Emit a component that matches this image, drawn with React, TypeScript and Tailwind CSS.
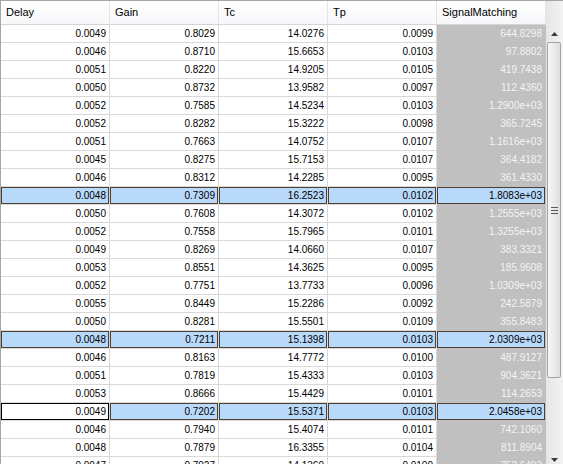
import React from 'react';

// one row of the results table: values + how it is highlighted
type Row = { v: string[]; sel?: 'row' | 'cur' };

const cols = ['Delay', 'Gain', 'Tc', 'Tp', 'SignalMatching'];

const rows: Row[] = [
  { v: ['0.0049', '0.8029', '14.0276', '0.0099', '644.8298'] },
  { v: ['0.0046', '0.8710', '15.6653', '0.0103', '97.8802'] },
  { v: ['0.0051', '0.8220', '14.9205', '0.0105', '419.7438'] },
  { v: ['0.0050', '0.8732', '13.9582', '0.0097', '112.4360'] },
  { v: ['0.0052', '0.7585', '14.5234', '0.0103', '1.2900e+03'] },
  { v: ['0.0052', '0.8282', '15.3222', '0.0098', '365.7245'] },
  { v: ['0.0051', '0.7663', '14.0752', '0.0107', '1.1616e+03'] },
  { v: ['0.0045', '0.8275', '15.7153', '0.0107', '364.4182'] },
  { v: ['0.0046', '0.8312', '14.2285', '0.0095', '361.4330'] },
  { v: ['0.0048', '0.7309', '16.2523', '0.0102', '1.8083e+03'], sel: 'row' },
  { v: ['0.0050', '0.7608', '14.3072', '0.0102', '1.2555e+03'] },
  { v: ['0.0052', '0.7558', '15.7965', '0.0101', '1.3255e+03'] },
  { v: ['0.0049', '0.8269', '14.0660', '0.0107', '383.3321'] },
  { v: ['0.0053', '0.8551', '14.3625', '0.0095', '185.9608'] },
  { v: ['0.0052', '0.7751', '13.7733', '0.0096', '1.0309e+03'] },
  { v: ['0.0055', '0.8449', '15.2286', '0.0092', '242.5879'] },
  { v: ['0.0050', '0.8281', '15.5501', '0.0109', '355.8483'] },
  { v: ['0.0048', '0.7211', '15.1398', '0.0103', '2.0309e+03'], sel: 'row' },
  { v: ['0.0046', '0.8163', '14.7772', '0.0100', '487.9127'] },
  { v: ['0.0051', '0.7819', '15.4333', '0.0103', '904.3621'] },
  { v: ['0.0053', '0.8666', '15.4429', '0.0101', '114.2653'] },
  { v: ['0.0049', '0.7202', '15.5371', '0.0103', '2.0458e+03'], sel: 'cur' },
  { v: ['0.0046', '0.7940', '15.4074', '0.0101', '742.1060'] },
  { v: ['0.0048', '0.7879', '16.3355', '0.0104', '811.8904'] },
  { v: ['0.0047', '0.7927', '14.1360', '0.0100', '752.6493'] },
];

const cellClass = (row: Row, ci: number) => {
  const last = ci === cols.length - 1;
  // row 22: current cell in first column is white with a black frame
  if (row.sel === 'cur' && ci === 0) return 'bg-white text-black border-[#d9d9d9] shadow-[inset_0_0_0_1px_#000]';
  if (row.sel) return `bg-[#b9d9fb] text-black shadow-[inset_0_0_0_1px_#4e3f30] ${last ? 'border-[#c0c0c0]' : 'border-[#d9d9d9]'}`;
  if (last) return 'bg-[#c0c0c0] text-[#f4f4f4] border-[#c0c0c0]';
  return 'bg-white text-black border-[#d9d9d9]';
};

const Arrow = ({ up }: { up?: boolean }) => (
  <svg width="7" height="4" viewBox="0 0 7 4">
    <polygon points={up ? '0,4 3.5,0 7,4' : '0,0 3.5,4 7,0'} fill="#3a3a3a" />
  </svg>
);

const ScrollBar = () => (
  <div className="w-[17px] h-full flex flex-col bg-gradient-to-r from-[#e6e6e6] to-[#f3f3f3]">
    <div className="h-6 shrink-0" />
    <div className="h-[17px] shrink-0 flex items-center justify-center">
      <Arrow up />
    </div>
    <div className="ml-[1px] w-[14px] h-[336px] shrink-0 rounded-[2px] border border-[#a3a3a3] bg-gradient-to-r from-[#f7f7f7] to-[#dedede] flex items-center justify-center">
      <svg width="7" height="7" viewBox="0 0 7 7">
        <rect x="0" y="0" width="7" height="1" fill="#5a5a5a" />
        <rect x="0" y="3" width="7" height="1" fill="#5a5a5a" />
        <rect x="0" y="6" width="7" height="1" fill="#5a5a5a" />
      </svg>
    </div>
    <div className="flex-1" />
    <div className="h-[13px] shrink-0 flex justify-center pt-[7px]">
      <Arrow />
    </div>
  </div>
);

export default function App() {
  return (
    <div className="w-[563px] h-[464px] overflow-hidden bg-white border-t border-l border-[#a6a6a6] flex font-['Liberation_Sans',Arial,sans-serif]">
      <div className="w-[545px] shrink-0 flex flex-col">
        <div className="flex h-6 shrink-0 border-b border-[#d5d5d5] bg-gradient-to-b from-white to-[#f6f7f9]">
          {cols.map(c => (
            <div key={c} className="w-[109px] shrink-0 border-r border-[#e4e4e4] pl-[5px] flex items-center text-[11px] text-black">
              {c}
            </div>
          ))}
        </div>
        {rows.map((r, ri) => (
          <div key={ri} className="flex h-[18px] shrink-0">
            {r.v.map((val, ci) => (
              <div
                key={ci}
                className={`w-[109px] shrink-0 border-r border-b flex items-center justify-end pr-[3px] text-[10px] ${cellClass(r, ci)}`}
              >
                {val}
              </div>
            ))}
          </div>
        ))}
      </div>
      <ScrollBar />
    </div>
  );
}
